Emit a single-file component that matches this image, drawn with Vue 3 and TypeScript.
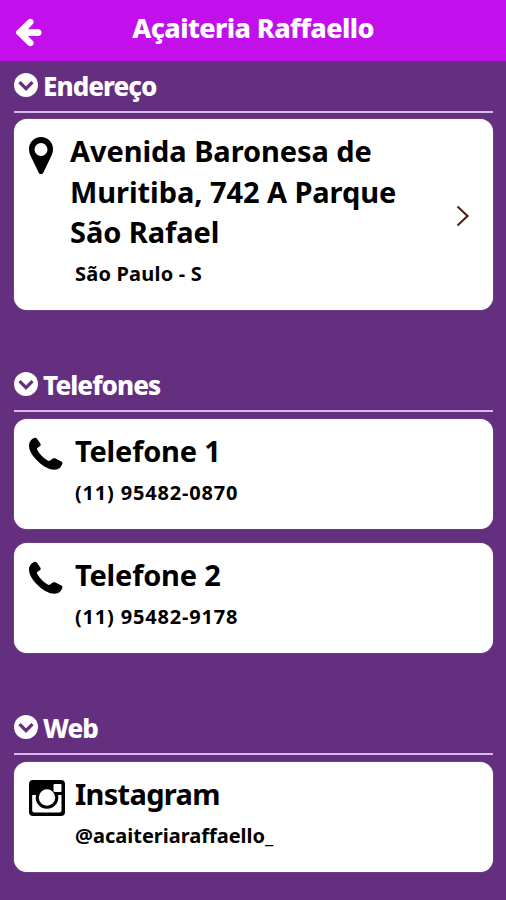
<script setup lang="ts">
interface Entry {
  icon: 'pin' | 'phone' | 'instagram'
  title: string[]
  detail: string
  link?: boolean
  kind: string
}

interface Section {
  name: string
  entries: Entry[]
}

const sections: Section[] = [
  {
    name: 'Endereço',
    entries: [
      {
        icon: 'pin',
        title: ['Avenida Baronesa de', 'Muritiba, 742 A Parque', 'São Rafael'],
        detail: 'São Paulo - S',
        link: true,
        kind: 'address',
      },
    ],
  },
  {
    name: 'Telefones',
    entries: [
      { icon: 'phone', title: ['Telefone 1'], detail: '(11) 95482-0870', kind: 'phone' },
      { icon: 'phone', title: ['Telefone 2'], detail: '(11) 95482-9178', kind: 'phone' },
    ],
  },
  {
    name: 'Web',
    entries: [
      { icon: 'instagram', title: ['Instagram'], detail: '@acaiteriaraffaello_', kind: 'web' },
    ],
  },
]
</script>

<template>
  <div class="screen">
    <header class="topbar">
      <svg class="back" viewBox="0 0 28 30">
        <path d="M1.500 13.500 13.500 1.700q2.400-2 4.800 0 2.200 2.300 0 4.700l-4.900 5.100h11q3.100.300 3.100 3.500t-3.100 3.500h-11l4.900 5.100q2.200 2.300 0 4.700-2.400 2-4.800 0L1.500 16.500q-1.200-1.500 0-3Z" fill="#fff" />
      </svg>
      <h1 class="title">Açaiteria Raffaello</h1>
    </header>
    <main class="content">
      <section v-for="section in sections" :key="section.name" class="section">
        <div class="section-head">
          <svg class="chevron-circle" viewBox="0 0 24 24">
            <circle cx="12" cy="12" r="12" fill="#fff" />
            <path d="m5.500 9.200 6.500 6.500 6.500-6.500" fill="none" stroke="#652f80" stroke-width="3.300" />
          </svg>
          <h2 class="section-name">{{ section.name }}</h2>
        </div>
        <div class="cards">
          <article v-for="entry in section.entries" :key="entry.detail" class="card" :class="entry.kind">
            <div class="icon-cell">
              <svg v-if="entry.icon === 'pin'" class="pin" viewBox="0 0 24 37">
                <path
                  fill="#000"
                  fill-rule="evenodd"
                  d="M12 0C5.300 0 0 5.300 0 12c0 2.200.4 4.200 1.200 5.900L9.600 35.500c.9 2 3.900 2 4.800 0l8.400-17.600c.8-1.700 1.200-3.700 1.200-5.900 0-6.700-5.300-12-12-12Zm0 19a6.500 6.500 0 1 1 0-13 6.500 6.500 0 0 1 0 13Z"
                />
              </svg>
              <svg v-else-if="entry.icon === 'phone'" class="phone-icon" viewBox="0 0 34 33">
                <path
                  fill="#000"
                  d="M4 1.500C5.500.3 7 .3 8 1.800L11.300 6.500c.7 1.100.5 2-.5 2.700L8.600 10.800c-.7.600-.7 1.300-.3 2.200 2.300 4.300 5.700 7.800 10.300 10.500 1.200.6 2 .5 2.800-.2l2.400-1.700c.9-.6 1.700-.6 2.700-.1l5.800 2.900c1.200.7 1.500 1.500 1 2.700-1.200 3.500-3.700 5.600-7.600 5.700-5.100.1-11-2.800-16.600-8.200C3.500 19.200 0 13.800 0 8.500 0 5.500 1.500 3.100 4 1.500Z"
                />
              </svg>
              <svg v-else class="instagram-icon" viewBox="0 0 36 36">
                <rect width="36" height="36" rx="4" fill="#000" />
                <path d="M3.200 15h29.300v15.500q0 2-2 2H5.200q-2 0-2-2Z" fill="#fff" />
                <circle cx="18" cy="17.500" r="11.300" fill="#000" />
                <circle cx="18" cy="17.500" r="8.200" fill="#fff" />
                <rect x="24.500" y="4" width="8" height="8" rx="1" fill="#fff" />
              </svg>
            </div>
            <div class="body">
              <h3 class="card-title">
                <span v-for="line in entry.title" :key="line" class="line">{{ line }}</span>
              </h3>
              <p class="detail">{{ entry.detail }}</p>
            </div>
            <svg v-if="entry.link" class="arrow" viewBox="0 0 14 22">
              <path d="m1.500 1.500 10 9.500-10 9.500" fill="none" stroke="#4a2818" stroke-width="2.200" />
            </svg>
          </article>
        </div>
      </section>
    </main>
  </div>
</template>

<style>
body {
  background: #652f80;
}
</style>

<style scoped>
.screen {
  box-sizing: border-box;
  width: 100%;
  height: 900px;
  overflow: hidden;
  background: #652f80;
  font-family: "Noto Sans", "Open Sans", sans-serif;
}
h1,
h2,
h3,
p {
  margin: 0;
  white-space: nowrap;
}
.topbar {
  display: grid;
  grid-template-columns: 60px 1fr 60px;
  height: 61px;
  background: #c30feb;
}
.back {
  width: 27px;
  height: 29px;
  margin: 18px 0 0 15px;
}
.title {
  justify-self: center;
  margin-top: 8px;
  color: #fff;
  font-size: 27px;
  line-height: 40px;
  font-weight: 800;
  letter-spacing: -0.62px;
}
.content {
  padding: 0 13px 0 14px;
}
.section {
  margin-bottom: 50px;
}
.section-head {
  display: flex;
  box-sizing: border-box;
  height: 52px;
  gap: 5px;
  padding-top: 12px;
  border-bottom: 2px solid #d9b9ec;
}
.chevron-circle {
  width: 24px;
  height: 24px;
}
.section-name {
  margin-top: -7px;
  color: #fff;
  font-size: 26px;
  line-height: 40px;
  font-weight: 800;
  letter-spacing: -0.95px;
}
.cards {
  display: grid;
  gap: 14px;
  padding-top: 7px;
}
.section:first-child .cards {
  padding-top: 6px;
}
.card {
  display: flex;
  box-sizing: border-box;
  height: 110px;
  padding: 12px 23px 0 15px;
  border-radius: 13px;
  background: #fff;
  box-shadow: 0 0 1px #d8c4b8;
  color: #000;
}
.address {
  height: 191px;
}
.icon-cell {
  flex: 0 0 46px;
}
.address .icon-cell {
  flex-basis: 41px;
}
.icon-cell svg {
  display: block;
}
.pin {
  width: 24px;
  height: 37px;
  margin-top: 6px;
}
.phone-icon {
  width: 34px;
  height: 33px;
  margin-top: 6px;
}
.instagram-icon {
  width: 36px;
  height: 36px;
  margin-top: 6px;
}
.body {
  flex: 1;
}
.card-title {
  font-size: 29px;
  line-height: 40.5px;
  font-weight: 700;
  letter-spacing: -0.2px;
}
.address .card-title {
  letter-spacing: -0.07px;
}
.web .card-title {
  letter-spacing: -0.7px;
}
.line {
  display: block;
}
.detail {
  font-size: 20px;
  line-height: 41px;
  font-weight: 700;
  letter-spacing: 0;
}
.phone .detail {
  letter-spacing: 0.82px;
}
.address .detail {
  padding-left: 5px;
  letter-spacing: 0.2px;
}
.arrow {
  width: 14px;
  height: 22px;
  margin-top: 74px;
}
</style>
